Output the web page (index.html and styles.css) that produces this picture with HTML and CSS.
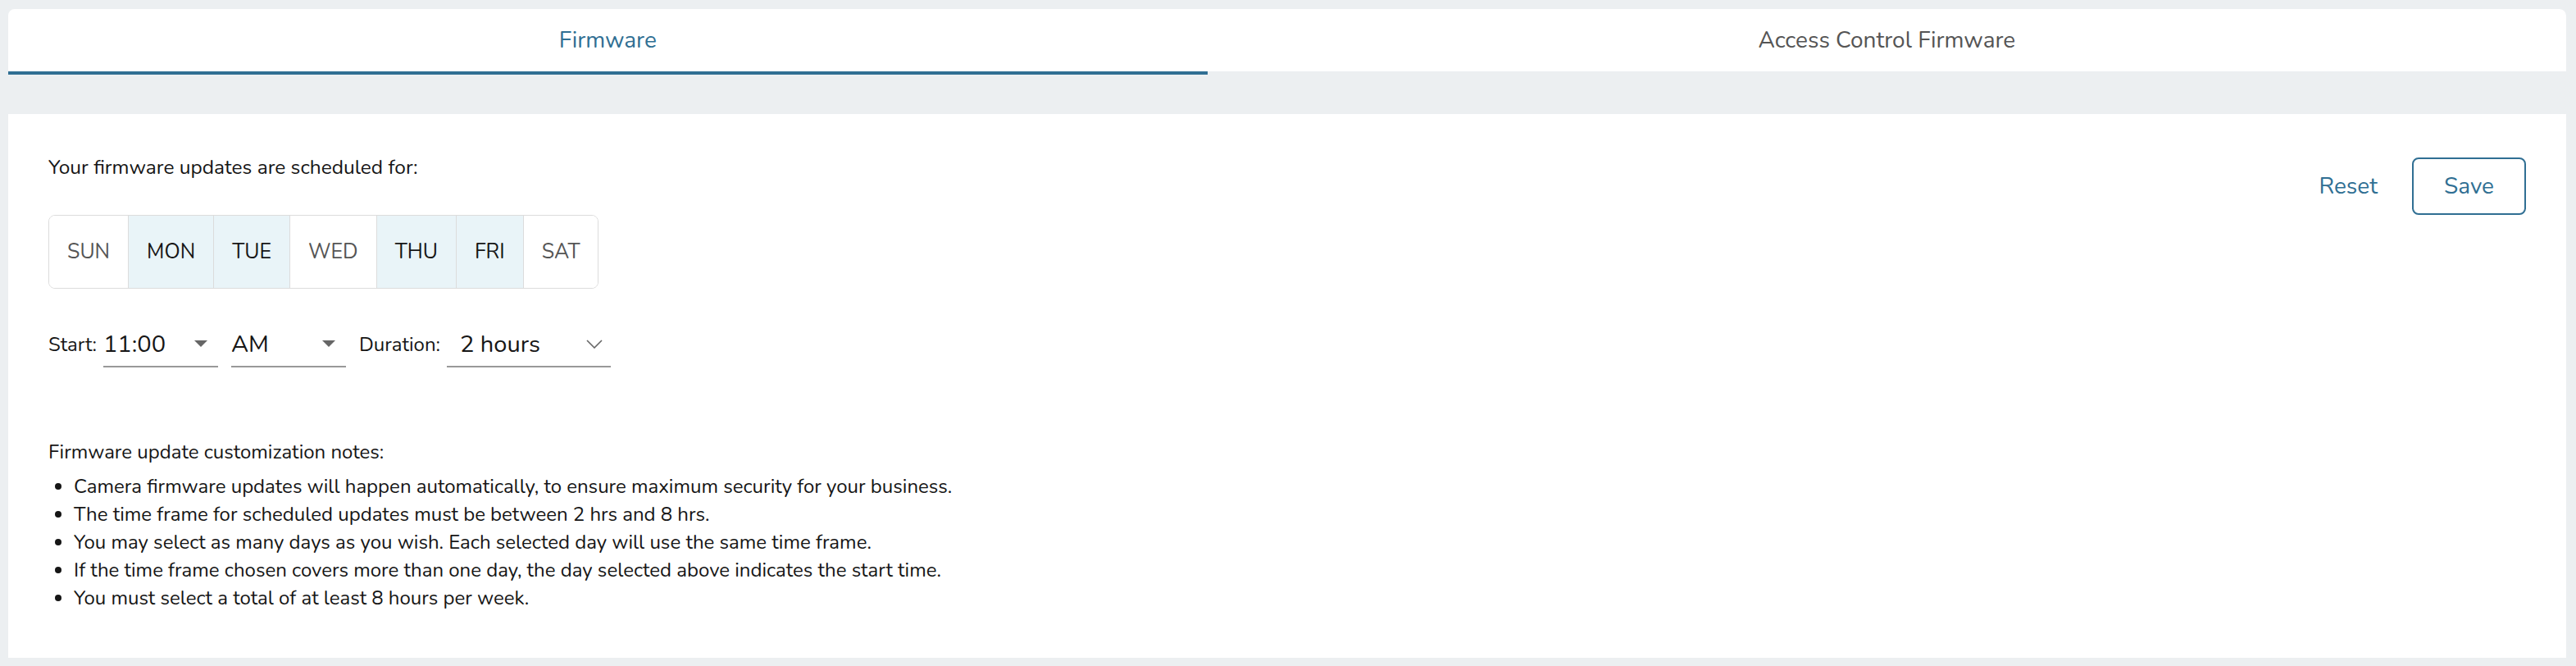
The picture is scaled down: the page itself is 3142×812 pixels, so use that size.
FILE: index.html
```html
<!DOCTYPE html>
<html lang="en">
<head>
<meta charset="utf-8">
<title>Firmware schedule</title>
<link rel="stylesheet" href="styles.css">
</head>
<body>
<div class="page">
  <nav class="tabs">
    <div class="tab tab-active">Firmware</div>
    <div class="tab">Access Control Firmware</div>
  </nav>
  <main class="panel">
    <div class="top">
      <div class="schedule">
        <p class="intro">Your firmware updates are scheduled for:</p>
        <div class="days">
          <div class="day">SUN</div>
          <div class="day day-on">MON</div>
          <div class="day day-on">TUE</div>
          <div class="day">WED</div>
          <div class="day day-on">THU</div>
          <div class="day day-on">FRI</div>
          <div class="day">SAT</div>
        </div>
        <div class="time-row">
          <span class="label">Start:</span>
          <div class="select select-time">
            <span class="value">11:00</span>
            <svg class="caret" viewBox="0 0 10 5" width="16" height="8"><path d="M0 0l5 5 5-5z" fill="#666"/></svg>
          </div>
          <div class="select select-ampm">
            <span class="value">AM</span>
            <svg class="caret" viewBox="0 0 10 5" width="16" height="8"><path d="M0 0l5 5 5-5z" fill="#666"/></svg>
          </div>
          <span class="label">Duration:</span>
          <div class="select select-duration">
            <span class="value">2 hours</span>
            <svg class="chevron" viewBox="0 0 20 11" width="20" height="11"><path d="M1 1l9 9 9-9" fill="none" stroke="#666" stroke-width="1.6"/></svg>
          </div>
        </div>
      </div>
      <div class="actions">
        <button class="btn-reset" type="button">Reset</button>
        <button class="btn-save" type="button">Save</button>
      </div>
    </div>
    <section class="notes">
      <p class="notes-title">Firmware update customization notes:</p>
      <ul class="notes-list">
        <li>Camera firmware updates will happen automatically, to ensure maximum security for your business.</li>
        <li>The time frame for scheduled updates must be between 2 hrs and 8 hrs.</li>
        <li>You may select as many days as you wish. Each selected day will use the same time frame.</li>
        <li>If the time frame chosen covers more than one day, the day selected above indicates the start time.</li>
        <li>You must select a total of at least 8 hours per week.</li>
      </ul>
    </section>
  </main>
</div>
</body>
</html>
```

FILE: styles.css
```css
* { box-sizing: border-box; }

html, body {
  margin: 0;
  height: 100%;
}

body {
  background: #eceff1;
  font-family: "Nunito", "Lato", "Open Sans", sans-serif;
  color: #161616;
}

.page {
  height: 812px;
  padding: 11px 12px 10px 10px;
  display: flex;
  flex-direction: column;
}

.tabs {
  display: flex;
}

.tab {
  flex: 1 1 auto;
  height: 80px;
  background: #fff;
  background-clip: padding-box;
  border-bottom: 4px solid transparent;
  display: flex;
  align-items: center;
  justify-content: center;
  font-size: 28px;
  color: #555;
}

.tab:first-child { border-top-left-radius: 8px; }
.tab:last-child { border-top-right-radius: 8px; }

.tab-active {
  color: #306f93;
  border-bottom-color: #306f93;
}

.panel {
  flex: 1;
  margin-top: 48px;
  background: #fff;
  padding: 48px 49px;
}

.top {
  display: flex;
  justify-content: space-between;
  align-items: flex-start;
}

.intro {
  margin: 0;
  font-size: 24.5px;
  line-height: 34px;
}

.days {
  margin-top: 41px;
  display: inline-flex;
  border: 1px solid #dcdcdc;
  border-radius: 8px;
  overflow: hidden;
  height: 90px;
}

.day {
  display: flex;
  align-items: center;
  padding: 0 22px;
  font-size: 25px;
  color: #555;
  background: #fff;
}

.day + .day { border-left: 1px solid #dcdcdc; }

.day-on {
  background: #e9f4f8;
  color: #161616;
}

.time-row {
  margin-top: 40px;
  display: flex;
  align-items: center;
  gap: 8px;
}

.label {
  font-size: 24px;
  color: #161616;
}

.select {
  height: 56px;
  border-bottom: 2px solid #999;
  display: flex;
  align-items: center;
  justify-content: space-between;
  font-size: 29px;
  color: #161616;
}

.select-time { width: 140px; padding-right: 13px; }
.select-ampm { width: 140px; padding-right: 13px; margin-left: 8px; margin-right: 8px; }
.select-duration { width: 200px; padding: 0 10px 0 16px; }

.caret, .chevron { display: block; }

.actions {
  margin-top: 5px;
  display: flex;
  align-items: center;
  gap: 28px;
}

.btn-reset,
.btn-save {
  font-family: inherit;
  font-size: 28px;
  color: #306f93;
  background: none;
  cursor: pointer;
}

.btn-reset {
  border: none;
  padding: 0 14px;
  height: 70px;
}

.btn-save {
  width: 139px;
  height: 70px;
  border: 2px solid #306f93;
  border-radius: 8px;
  padding: 0;
}

.notes {
  margin-top: 86px;
}

.notes-title {
  margin: 0;
  font-size: 24px;
  line-height: 34px;
}

.notes-list {
  margin: 8px 0 0;
  padding-left: 31px;
  font-size: 24px;
  line-height: 34px;
}
```
